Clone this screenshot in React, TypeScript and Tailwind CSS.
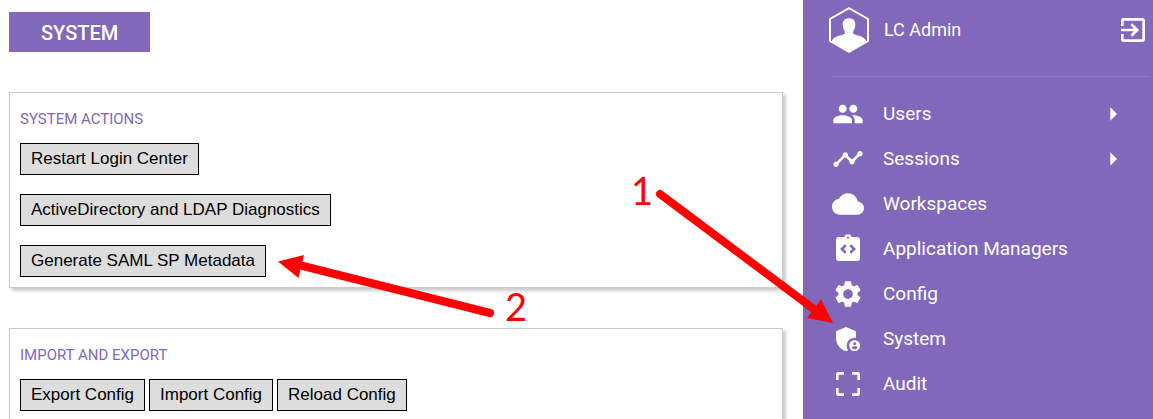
import type { ReactNode } from "react";
import type { IconType } from "react-icons";
import {
  MdAdminPanelSettings,
  MdArrowRight,
  MdCloud,
  MdCropFree,
  MdExitToApp,
  MdIntegrationInstructions,
  MdPeople,
  MdSettings,
  MdTimeline,
} from "react-icons/md";

type NavItem = { label: string; icon: IconType; expandable?: boolean };

const navItems: NavItem[] = [
  { label: "Users", icon: MdPeople, expandable: true },
  { label: "Sessions", icon: MdTimeline, expandable: true },
  { label: "Workspaces", icon: MdCloud },
  { label: "Application Managers", icon: MdIntegrationInstructions },
  { label: "Config", icon: MdSettings },
  { label: "System", icon: MdAdminPanelSettings },
  { label: "Audit", icon: MdCropFree },
];

function ActionButton({ children }: { children: ReactNode }) {
  return (
    <button
      type="button"
      className="h-8 border border-black bg-[#dddddd] px-[10px] font-['Liberation_Sans',Arial,sans-serif] text-[17px] leading-[30px] whitespace-nowrap text-black"
    >
      {children}
    </button>
  );
}

function Panel({ title, children }: { title: string; children: ReactNode }) {
  return (
    <section className="border border-[#cccccc] bg-white px-[10px] pt-4 pb-[10px] shadow-[3px_3px_3px_rgba(0,0,0,0.2)]">
      <h2 className="mb-[14px] text-[15px] leading-5 text-[#8168bb]">{title}</h2>
      {children}
    </section>
  );
}

function Avatar() {
  return (
    <svg viewBox="0 0 40 46" className="h-[46px] w-10" aria-hidden="true">
      <path d="M20 1.2 39 12v22L20 44.8 1 34V12Z" fill="none" stroke="white" strokeWidth="2" />
      <path
        d="M20 11.300c-4.500 0-6.500 2.800-6.300 6.700.1 2.600 1 4.600 2.100 6.200v2.600C13.500 28.600 4 28.500 2.500 35L20 45.500 37.500 35C36 28.500 26.500 28.600 24.200 26.800v-2.600c1.100-1.600 2-3.600 2.100-6.200.2-3.900-1.800-6.700-6.300-6.700Z"
        fill="white"
      />
    </svg>
  );
}

function StepTwo() {
  return (
    <svg
      viewBox="0 0 260 90"
      className="pointer-events-none absolute top-[250px] left-[275px] z-10 h-[90px] w-[260px]"
    >
      <path d="M215 63 28 16" stroke="red" strokeWidth="8" strokeLinecap="round" />
      <path d="M3 11.5 29 5 23.5 28Z" fill="red" />
      <text x="230" y="71" fill="red" className="font-['Lato',sans-serif] text-[38px]">
        2
      </text>
    </svg>
  );
}

function StepOne() {
  return (
    <svg
      viewBox="-10 -20 220 180"
      className="pointer-events-none absolute top-[150px] left-[-185px] z-10 h-[180px] w-[220px]"
    >
      <path d="M32 24 187 140" stroke="red" strokeWidth="8" strokeLinecap="round" />
      <path d="M205 153 193 129.5 179 148Z" fill="red" />
      <text x="3" y="35" fill="red" className="font-['Lato',sans-serif] text-[38px]">
        1
      </text>
    </svg>
  );
}

export default function App() {
  return (
    <div className="flex h-screen overflow-hidden bg-white font-['Roboto',sans-serif]">
      <main className="relative min-w-0 flex-1 pt-3 pr-5 pl-[9px]">
        <h1 className="mb-10 h-10 w-fit bg-[#8168bb] px-8 text-xl leading-[42px] font-medium text-white">
          SYSTEM
        </h1>
        <div className="flex flex-col gap-10">
          <Panel title="SYSTEM ACTIONS">
            <div className="flex flex-col items-start gap-[19px]">
              <ActionButton>Restart Login Center</ActionButton>
              <ActionButton>ActiveDirectory and LDAP Diagnostics</ActionButton>
              <ActionButton>Generate SAML SP Metadata</ActionButton>
            </div>
          </Panel>
          <Panel title="IMPORT AND EXPORT">
            <div className="flex gap-1">
              <ActionButton>Export Config</ActionButton>
              <ActionButton>Import Config</ActionButton>
              <ActionButton>Reload Config</ActionButton>
            </div>
          </Panel>
        </div>
        <StepTwo />
      </main>

      <aside className="relative w-[350px] shrink-0 bg-[#8168bb] text-white">
        <header className="flex items-center pt-[7px] pr-1 pl-[26px]">
          <Avatar />
          <span className="ml-[15px] flex-1 text-[18px] leading-6">LC Admin</span>
          <button type="button" aria-label="Log out">
            <MdExitToApp className="size-8" />
          </button>
        </header>
        <nav className="mt-[23px] mr-[5px] ml-[29px] border-t border-[#9079c6] pt-[14px]">
          <ul>
            {navItems.map(({ label, icon: Icon, expandable }) => (
              <li key={label}>
                <a href="#" className="flex h-[45px] items-center pr-[19px]">
                  <Icon className="size-8" />
                  <span className="ml-[19px] flex-1 text-[19px] leading-6">{label}</span>
                  {expandable && <MdArrowRight className="size-8" />}
                </a>
              </li>
            ))}
          </ul>
        </nav>
        <StepOne />
      </aside>
    </div>
  );
}
